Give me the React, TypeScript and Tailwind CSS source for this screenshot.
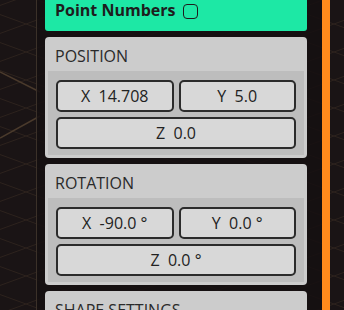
import React from 'react';

const font = { fontFamily: '"Open Sans", "Noto Sans", sans-serif' };

function Field({ label }: { label: string }) {
  return (
    <div className="flex-1 h-[32px] rounded-[5px] border-2 border-[#2b2b2b] bg-[#d8d8d8] flex items-center justify-center text-[16px] text-[#222] whitespace-pre">
      {label}
    </div>
  );
}

function Panel({ title, fields }: { title: string; fields: [string, string, string] }) {
  return (
    <div className="shrink-0 rounded-[4px] bg-[#cccccc] p-[3px]">
      <div className="h-[31px] flex items-center px-[7px] text-[16px] text-[#2a2a2a]">{title}</div>
      <div className="bg-[#bdbdbd] px-[8px] pt-[9px] pb-[6px] flex flex-col gap-[5px]">
        <div className="flex gap-[5px]">
          <Field label={fields[0]} />
          <Field label={fields[1]} />
        </div>
        <div className="flex">
          <Field label={fields[2]} />
        </div>
      </div>
    </div>
  );
}

function Grid() {
  const lines = [];
  for (let i = -12; i < 20; i++) {
    lines.push(<line key={'a' + i} x1={-40} y1={i * 28} x2={400} y2={i * 28 + 160} />);
    lines.push(<line key={'b' + i} x1={-40} y1={i * 28 + 160} x2={400} y2={i * 28} />);
  }
  return (
    <svg className="absolute inset-0" width="344" height="310" viewBox="0 0 344 310">
      <g stroke="#3a2d24" strokeWidth="1" opacity="0.6">{lines}</g>
      <path d="M0 72 L40 92" stroke="#4a3a2c" strokeWidth="1.5" />
      <path d="M0 138 L40 116" stroke="#4a3a2c" strokeWidth="1.5" />
    </svg>
  );
}

export default function App() {
  return (
    <div className="relative w-[344px] h-[310px] overflow-hidden bg-[#1a1415]" style={font}>
      <Grid />
      <div className="relative flex h-full">
        <div className="w-[36px] shrink-0" />
        <div className="w-[286px] shrink-0 border-l border-[#3b3129] bg-[#150f10]/85 pl-[8px] pr-[15px] flex flex-col gap-[6px] mt-[-10px]">
          <div className="shrink-0 h-[41px] rounded-b-[3px] bg-[#1de8a5] flex items-end pb-[13px] px-[10px] gap-[8px]">
            <span className="text-[16px] font-bold text-[#1d1d1d] leading-none">Point Numbers</span>
            <span className="w-[15px] h-[15px] rounded-[4px] border-[1.5px] border-[#1d1d1d] mb-[-1px]" />
          </div>
          <Panel title="POSITION" fields={['X  14.708', 'Y  5.0', 'Z  0.0']} />
          <Panel title="ROTATION" fields={['X  -90.0 °', 'Y  0.0 °', 'Z  0.0 °']} />
          <div className="shrink-0 rounded-t-[4px] bg-[#cccccc] p-[3px] h-[60px]">
            <div className="h-[31px] flex items-center px-[7px] text-[16px] text-[#2a2a2a]">SHAPE SETTINGS</div>
          </div>
        </div>
        <div className="w-[8px] shrink-0 bg-[#ff8a1c]" />
      </div>
    </div>
  );
}
